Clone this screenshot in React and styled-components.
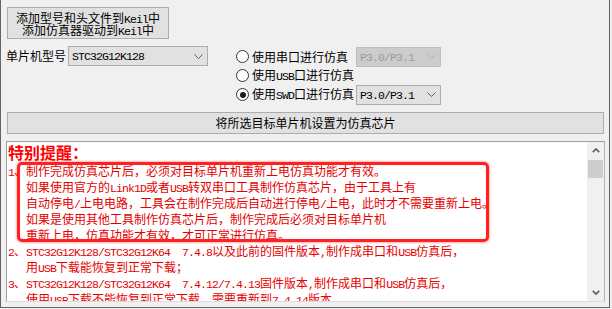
import React from 'react';
import styled, { createGlobalStyle } from 'styled-components';

const colors = {
  face: '#F0F0F0',
  button: '#E1E1E1',
  buttonBorder: '#ADADAD',
  frame: '#646464',
  panelBorder: '#A0A0A0',
  red: '#E60000',
  title: '#FF0000',
  mark: '#FF2020',
  disabledBg: '#CCCCCC',
  disabledBorder: '#BFBFBF',
  disabledText: '#9A9A9A',
  thumb: '#CDCDCD',
  arrow: '#606060',
};

const cjk = `'Noto Sans CJK SC', 'Noto Sans', sans-serif`;

const GlobalStyle = createGlobalStyle`
  html, body {
    margin: 0;
    background: ${colors.face};
  }
  body {
    font-family: ${cjk};
    font-size: 12px;
    color: #000;
  }
  *, *::before, *::after {
    box-sizing: border-box;
  }
`;

// SimSun-like half-width latin: 6px per glyph
const Lat = styled.span`
  font-family: 'Liberation Mono', monospace;
  font-size: 11.5px;
  letter-spacing: -0.9px;
  white-space: pre;
`;

const mix = text =>
  text.split(/([\x20-\x7e]+)/).map((part, i) =>
    /^[\x20-\x7e]+$/.test(part) ? <Lat key={i}>{part}</Lat> : part
  );

const Window = styled.div`
  width: 610px;
  height: 308px;
  display: flex;
  flex-direction: column;
  padding: 7px 4px 5px 5px;
  border: 1px solid ${colors.frame};
  border-top: none;
  background: ${colors.face};
`;

const Top = styled.div`
  display: flex;
  height: 97px;
`;

const LeftCol = styled.div`
  display: flex;
  flex-direction: column;
  gap: 7px;
`;

const Button = styled.div`
  display: flex;
  flex-direction: column;
  align-items: center;
  justify-content: center;
  height: ${p => p.$height}px;
  width: ${p => (p.$width ? `${p.$width}px` : 'auto')};
  margin: 0 1px;
  padding-top: ${p => p.$padTop || 0}px;
  background: ${colors.button};
  border: 1px solid ${colors.buttonBorder};
  line-height: ${p => p.$lineHeight || 20}px;
  white-space: nowrap;
`;

const ButtonLine = styled.span`
  display: block;
  height: 12px;
  line-height: 12px;
`;

const FieldRow = styled.div`
  display: flex;
  align-items: center;
  height: 20px;
`;

const Label = styled.span`
  width: 62px;
  line-height: 20px;
  white-space: nowrap;
`;

const Combo = styled.div`
  display: flex;
  align-items: center;
  justify-content: space-between;
  grid-column: ${p => p.$column || 'auto'};
  width: ${p => p.$width}px;
  height: 20px;
  padding: 0 4px 0 3px;
  background: ${p => (p.$disabled ? colors.disabledBg : colors.button)};
  border: 1px solid ${p => (p.$disabled ? colors.disabledBorder : colors.buttonBorder)};
  color: ${p => (p.$disabled ? colors.disabledText : '#000')};
  line-height: 18px;
  white-space: nowrap;
`;

const RadioGrid = styled.div`
  display: grid;
  grid-template-columns: 120px 85px;
  grid-auto-rows: 19px;
  align-items: center;
  margin-left: 28px;
  padding-top: 40px;
`;

const RadioItem = styled.div`
  display: flex;
  align-items: center;
  gap: 3px;
  grid-column: 1;
  white-space: nowrap;
  line-height: 19px;
`;

const RadioDot = styled.span`
  display: flex;
  align-items: center;
  justify-content: center;
  width: 13px;
  height: 13px;
  border: 1px solid #333;
  border-radius: 50%;
  background: #fff;

  &::after {
    content: '';
    width: 6px;
    height: 6px;
    border-radius: 50%;
    background: ${p => (p.$checked ? '#1a1a1a' : 'transparent')};
  }
`;

const WideButton = styled(Button)`
  margin-top: 8px;
`;

const Panel = styled.div`
  flex: 1;
  display: flex;
  margin-top: 7px;
  min-height: 0;
  border: 1px solid ${colors.panelBorder};
  border-bottom-color: #dcdcdc;
  border-right-color: #b4b4b4;
`;

const TextArea = styled.div`
  position: relative;
  flex: 1;
  overflow: hidden;
  background: #fff;
  padding-left: 1px;
  color: ${colors.red};
`;

const Title = styled.div`
  font-size: 16px;
  font-weight: 700;
  line-height: 21px;
  height: 21px;
  color: ${colors.title};
`;

const Line = styled.div`
  height: 16px;
  line-height: 16px;
  padding-left: ${p => (p.$indent ? 18 : 0)}px;
  white-space: pre;
`;

const Highlight = styled.div`
  position: absolute;
  left: 10px;
  top: 20px;
  width: 472px;
  height: 80px;
  border: 3px solid ${colors.mark};
  border-radius: 5px;
  box-shadow: 0 0 2px 1px rgba(255, 40, 40, 0.35), inset 0 0 1px rgba(255, 40, 40, 0.4);
  pointer-events: none;
`;

const ScrollBar = styled.div`
  display: flex;
  flex-direction: column;
  width: 17px;
  background: ${colors.face};
`;

const ScrollArrow = styled.div`
  display: flex;
  align-items: center;
  justify-content: center;
  height: 17px;
  margin-top: ${p => (p.$down ? 'auto' : '0')};
`;

const Thumb = styled.div`
  height: 18px;
  margin: 1px 1px 0;
  background: ${colors.thumb};
`;

const Chevron = ({ color = colors.arrow }) => (
  <svg width="9" height="5" viewBox="0 0 9 5">
    <path d="M0.5 0.5 L4.5 4.5 L8.5 0.5" fill="none" stroke={color} strokeWidth="1" />
  </svg>
);

const ScrollGlyph = ({ down }) => (
  <svg width="8" height="5" viewBox="0 0 8 5">
    <path
      d={down ? 'M0.8 0.8 L4 4 L7.2 0.8' : 'M0.8 4.2 L4 1 L7.2 4.2'}
      fill="none"
      stroke={colors.arrow}
      strokeWidth="1.7"
    />
  </svg>
);

const radios = [
  { label: '使用串口进行仿真', port: 'P3.0/P3.1', disabled: true },
  { label: '使用USB口进行仿真' },
  { label: '使用SWD口进行仿真', port: 'P3.0/P3.1', checked: true },
];

const notes = [
  { text: '1、制作完成仿真芯片后，必须对目标单片机重新上电仿真功能才有效。' },
  { text: '如果使用官方的Link1D或者USB转双串口工具制作仿真芯片，由于工具上有', indent: true },
  { text: '自动停电/上电电路，工具会在制作完成后自动进行停电/上电，此时才不需要重新上电。', indent: true },
  { text: '如果是使用其他工具制作仿真芯片后，制作完成后必须对目标单片机', indent: true },
  { text: '重新上电，仿真功能才有效，才可正常进行仿真。', indent: true },
  { text: '2、STC32G12K128/STC32G12K64  7.4.8以及此前的固件版本,制作成串口和USB仿真后，' },
  { text: '用USB下载能恢复到正常下载；', indent: true },
  { text: '3、STC32G12K128/STC32G12K64  7.4.12/7.4.13固件版本,制作成串口和USB仿真后，' },
  { text: '使用USB下载不能恢复到正常下载，需要重新到7.4.14版本', indent: true },
];

const App = () => (
  <>
    <GlobalStyle />
    <Window>
      <Top>
        <LeftCol>
          <Button $height={32} $width={162} $padTop={1} $lineHeight={12}>
            <ButtonLine>{mix('添加型号和头文件到Keil中')}</ButtonLine>
            <ButtonLine>{mix('添加仿真器驱动到Keil中')}</ButtonLine>
          </Button>
          <FieldRow>
            <Label>单片机型号</Label>
            <Combo $width={140}>
              <span>{mix('STC32G12K128')}</span>
              <Chevron />
            </Combo>
          </FieldRow>
        </LeftCol>
        <RadioGrid>
          {radios.map(r => (
            <React.Fragment key={r.label}>
              <RadioItem>
                <RadioDot $checked={r.checked} />
                <span>{mix(r.label)}</span>
              </RadioItem>
              {r.port && (
                <Combo $width={85} $column={2} $disabled={r.disabled}>
                  <span>{mix(r.port)}</span>
                  <Chevron color={r.disabled ? '#B0B0B0' : colors.arrow} />
                </Combo>
              )}
            </React.Fragment>
          ))}
        </RadioGrid>
      </Top>
      <WideButton $height={22}>将所选目标单片机设置为仿真芯片</WideButton>
      <Panel>
        <TextArea>
          <Title>特别提醒：</Title>
          {notes.map(n => (
            <Line key={n.text} $indent={n.indent}>
              {mix(n.text)}
            </Line>
          ))}
          <Highlight />
        </TextArea>
        <ScrollBar>
          <ScrollArrow>
            <ScrollGlyph />
          </ScrollArrow>
          <Thumb />
          <ScrollArrow $down>
            <ScrollGlyph down />
          </ScrollArrow>
        </ScrollBar>
      </Panel>
    </Window>
  </>
);

export default App;
